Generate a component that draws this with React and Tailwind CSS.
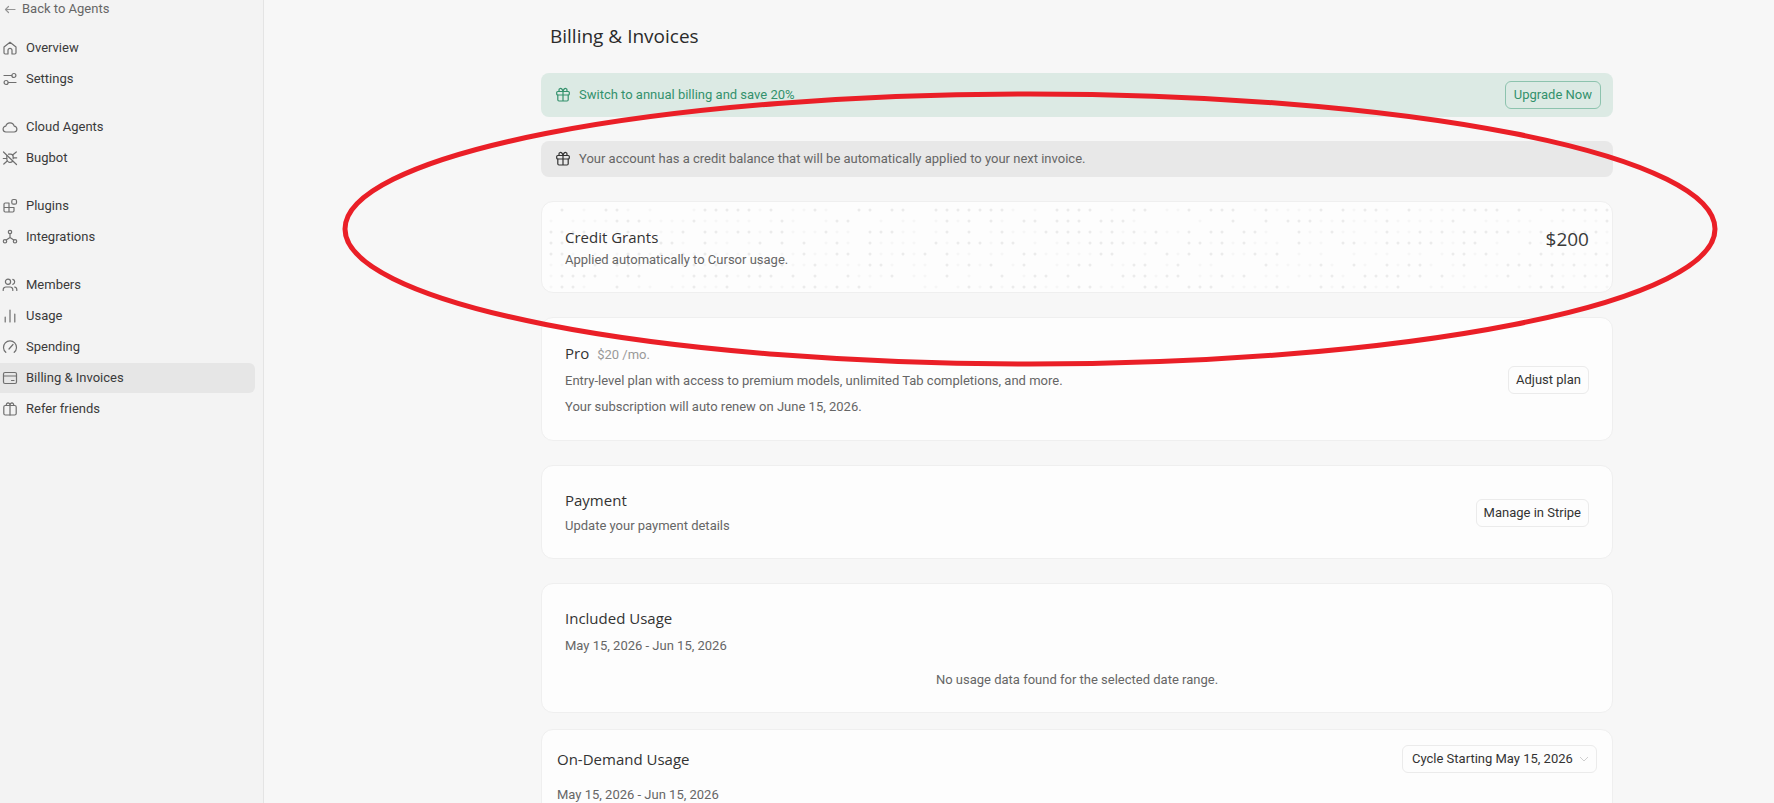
import React from 'react'

const navGroups = [
  [
    { label: 'Overview', icon: 'home' },
    { label: 'Settings', icon: 'settings' },
  ],
  [
    { label: 'Cloud Agents', icon: 'cloud' },
    { label: 'Bugbot', icon: 'bug' },
  ],
  [
    { label: 'Plugins', icon: 'plugins' },
    { label: 'Integrations', icon: 'integrations' },
  ],
  [
    { label: 'Members', icon: 'members' },
    { label: 'Usage', icon: 'usage' },
    { label: 'Spending', icon: 'spending' },
    { label: 'Billing & Invoices', icon: 'billing', active: true },
    { label: 'Refer friends', icon: 'refer' },
  ],
]

const iconShapes = {
  back: <path d="M13 8.500H3.500M6.500 5.500l-3 3 3 3" />,
  home: <path d="M6 14H3.200A1.200 1.200 0 0 1 2 12.800V6.900L8 2.300l6 4.600v5.900a1.200 1.200 0 0 1-1.200 1.200H10v-3.700a2 2 0 0 0-4 0z" />,
  settings: (
    <>
      <path d="M2 4.500h7.600M6.400 11.500H14" />
      <circle cx="11.900" cy="4.500" r="2" />
      <circle cx="4.100" cy="11.500" r="2" />
    </>
  ),
  cloud: <path d="M4.200 13a2.900 2.900 0 0 1-.4-5.800 4.300 4.300 0 0 1 8.400 0A2.900 2.900 0 0 1 11.800 13z" />,
  bug: (
    <>
      <path d="M1.500 2 14.500 14.500" />
      <path d="M4.800 5.500v3.700a3.300 3.300 0 0 0 5.600 2.300M6.500 4.200h2A2.700 2.700 0 0 1 11.200 6.900v1.800" />
      <path d="M1.300 8.500h3.500M11.200 7.800h3.500M1.800 14l3.400-3M14.300 2l-3.700 3" />
    </>
  ),
  plugins: (
    <>
      <path d="M7 14V5H3.200A1.200 1.200 0 0 0 2 6.200v6.600A1.200 1.200 0 0 0 3.200 14h7.600a1.200 1.200 0 0 0 1.200-1.200V9.500H2" />
      <rect x="9.800" y="1.500" width="4.700" height="4.700" rx="1.500" />
    </>
  ),
  integrations: (
    <>
      <circle cx="8" cy="3" r="1.700" />
      <circle cx="3" cy="12.300" r="1.700" />
      <circle cx="13" cy="12.300" r="1.700" />
      <path d="M8 4.700v3.800M4.200 11 8 8.500l3.800 2.500" />
    </>
  ),
  members: (
    <>
      <circle cx="6" cy="4.800" r="2.600" />
      <path d="M1.200 13.500v-.8a2.700 2.700 0 0 1 2.700-2.700h4.200a2.700 2.700 0 0 1 2.700 2.700v.8M10.800 2.300a2.600 2.600 0 0 1 0 5M12.600 10a2.600 2.600 0 0 1 2.200 2.600v.9" />
    </>
  ),
  usage: <path d="M3.200 9v5M8 2v12M12.800 6v8" />,
  spending: <path d="M3.800 13.300a6.500 6.500 0 1 1 8.400 0M7 10l4-4.500" />,
  billing: (
    <>
      <rect x="1.500" y="2.500" width="13" height="11" rx="1.500" />
      <path d="M1.500 6h13M9.500 10.500h2.500" />
    </>
  ),
  refer: (
    <>
      <rect x="1.800" y="4.500" width="12.400" height="9.500" rx="1.500" />
      <path d="M8 4.500V14M8 4.500C8 1 4 1 4.300 4.500M8 4.500c0-3.500 4-3.500 3.700 0" />
    </>
  ),
  gift: (
    <>
      <rect x="1.700" y="4.500" width="12.600" height="3.500" rx="1" />
      <path d="M2.800 8v4.800A1.200 1.200 0 0 0 4 14h8a1.200 1.200 0 0 0 1.200-1.200V8M8 4.500V14M8 4.500C7.600 2.200 6.300 1.200 5.100 1.500 3.400 2 3.700 4.500 5 4.500M8 4.500c.4-2.300 1.700-3.300 2.900-3C12.600 2 12.300 4.500 11 4.500" />
    </>
  ),
}

const Icon = ({ name, className }) => (
  <svg
    viewBox="0 0 16 16"
    className={className}
    fill="none"
    stroke="currentColor"
    strokeWidth="1.200"
    strokeLinecap="round"
    strokeLinejoin="round"
    aria-hidden="true"
  >
    {iconShapes[name]}
  </svg>
)

const NavItem = ({ label, icon, active }) => (
  <a
    href="#"
    aria-current={active ? 'page' : undefined}
    className={
      active
        ? 'flex h-[30px] items-center gap-2 rounded-r-md bg-[#e6e6e6] pl-[2px] text-[#3a3a3a]'
        : 'flex h-[30px] items-center gap-2 rounded-r-md pl-[2px] text-[#3a3a3a]'
    }
  >
    <Icon name={icon} className="size-4 text-[#6f6f6f]" />
    {label}
  </a>
)

const Sidebar = () => (
  <aside className="w-[264px] shrink-0 border-r border-[#e4e4e4] bg-[#f3f3f3] pr-2">
    <a href="#" className="flex h-[18px] items-center gap-1 pl-[2px] text-[#666666]">
      <Icon name="back" className="size-4 text-[#949494]" />
      Back to Agents
    </a>
    <nav className="mt-[15px] flex flex-col gap-[18px]">
      {navGroups.map((group) => (
        <div key={group[0].label} className="flex flex-col gap-px">
          {group.map((item) => (
            <NavItem key={item.label} {...item} />
          ))}
        </div>
      ))}
    </nav>
  </aside>
)

const Card = ({ className, children }) => (
  <section className={`rounded-xl border border-[#efefef] bg-[#fdfdfd] ${className}`}>{children}</section>
)

const Heading = ({ children }) => (
  <h2 className="font-['Open_Sans',sans-serif] text-[15px] leading-5 text-[#333333]">{children}</h2>
)

const Button = ({ children }) => (
  <button className="h-7 shrink-0 rounded-md border border-[#ebebeb] px-[7px] text-[#333333]">{children}</button>
)

// Scattered dot grid behind the credit card
const DotGrid = () => {
  const dots = []
  for (let row = 0; row < 8; row++) {
    for (let col = 0; col < 97; col++) {
      const n = Math.sin(row * 127.1 + col * 311.7) * 43758.5453
      const r = n - Math.floor(n)
      if (r > 0.2) {
        dots.push(
          <circle key={`${row}-${col}`} cx={9 + col * 11} cy={8 + row * 11} r="1.5" fill={r > 0.6 ? '#ebebeb' : '#f6f6f6'} />
        )
      }
    }
  }
  return (
    <svg className="absolute inset-0 size-full" aria-hidden="true">
      {dots}
    </svg>
  )
}

const App = () => {
  return (
    <div className="relative flex h-screen overflow-hidden bg-[#f7f7f7] font-[Roboto,sans-serif] text-[13px] leading-5 text-[#666666]">
      <Sidebar />

      <main className="flex min-w-0 flex-1 justify-center pl-[116px]">
        <div className="w-full max-w-[1072px] shrink-0">
          <h1 className="mt-6 mb-[25px] pl-[9px] font-['Open_Sans',sans-serif] text-[19px] leading-6 text-[#2b2b2b]">
            Billing &amp; Invoices
          </h1>

          <div className="flex h-11 items-center gap-2 rounded-lg bg-[#dceae4] pr-3 pl-[14px] text-[#33916c]">
            <Icon name="gift" className="size-4" />
            <p className="flex-1">Switch to annual billing and save 20%</p>
            <button className="h-7 rounded-md border border-[#8dc3ae] px-2">Upgrade Now</button>
          </div>

          <div className="mt-6 flex h-9 items-center gap-2 rounded-lg bg-[#e8e8e8] pr-3 pl-[14px]">
            <Icon name="gift" className="size-4 text-[#333333]" />
            <p>Your account has a credit balance that will be automatically applied to your next invoice.</p>
          </div>

          <Card className="relative mt-6 overflow-hidden px-[23px] pt-[25px] pb-[22px]">
            <DotGrid />
            <div className="relative flex items-start justify-between">
              <div>
                <Heading>Credit Grants</Heading>
                <p className="mt-[3px]">Applied automatically to Cursor usage.</p>
              </div>
              <p className="font-['Open_Sans',sans-serif] text-[19px] leading-6 text-[#3a3a3a]">$200</p>
            </div>
          </Card>

          <Card className="mt-6 flex items-center justify-between px-[23px] pt-[25px] pb-[23px]">
            <div>
              <div className="flex h-5 items-baseline gap-2">
                <Heading>Pro</Heading>
                <p className="text-[#999999]">$20 /mo.</p>
              </div>
              <p className="mt-2">Entry-level plan with access to premium models, unlimited Tab completions, and more.</p>
              <p className="mt-[6px]">Your subscription will auto renew on June 15, 2026.</p>
            </div>
            <Button>Adjust plan</Button>
          </Card>

          <Card className="mt-6 flex items-center justify-between px-[23px] pt-6 pb-[22px]">
            <div>
              <Heading>Payment</Heading>
              <p className="mt-[6px]">Update your payment details</p>
            </div>
            <Button>Manage in Stripe</Button>
          </Card>

          <Card className="mt-6 px-[23px] pt-6 pb-[22px]">
            <Heading>Included Usage</Heading>
            <p className="mt-2">May 15, 2026 - Jun 15, 2026</p>
            <p className="mt-[14px] text-center">No usage data found for the selected date range.</p>
          </Card>

          <Card className="mt-4 px-[15px] py-[15px]">
            <div className="flex items-center justify-between">
              <Heading>On-Demand Usage</Heading>
              <div className="relative">
                <select
                  aria-label="Billing cycle"
                  className="h-7 w-[195px] appearance-none rounded-md border border-[#ebebeb] pl-[9px] text-[#333333]"
                >
                  <option>Cycle Starting May 15, 2026</option>
                </select>
                <svg viewBox="0 0 10 10" className="absolute top-[9px] right-2 size-[10px]" fill="none" stroke="#cfcfcf" aria-hidden="true">
                  <path d="M1 3l4 4 4-4" />
                </svg>
              </div>
            </div>
            <p className="mt-3">May 15, 2026 - Jun 15, 2026</p>
          </Card>
        </div>
      </main>

      {/* Hand-drawn highlight around the credit section */}
      <svg className="pointer-events-none absolute top-[91px] left-[342px] h-[276px] w-[1376px]" viewBox="0 0 1376 276" fill="none" aria-hidden="true">
        <ellipse cx="688" cy="138" rx="685" ry="135" stroke="#ea1f27" strokeWidth="5" />
      </svg>
    </div>
  )
}

export default App
